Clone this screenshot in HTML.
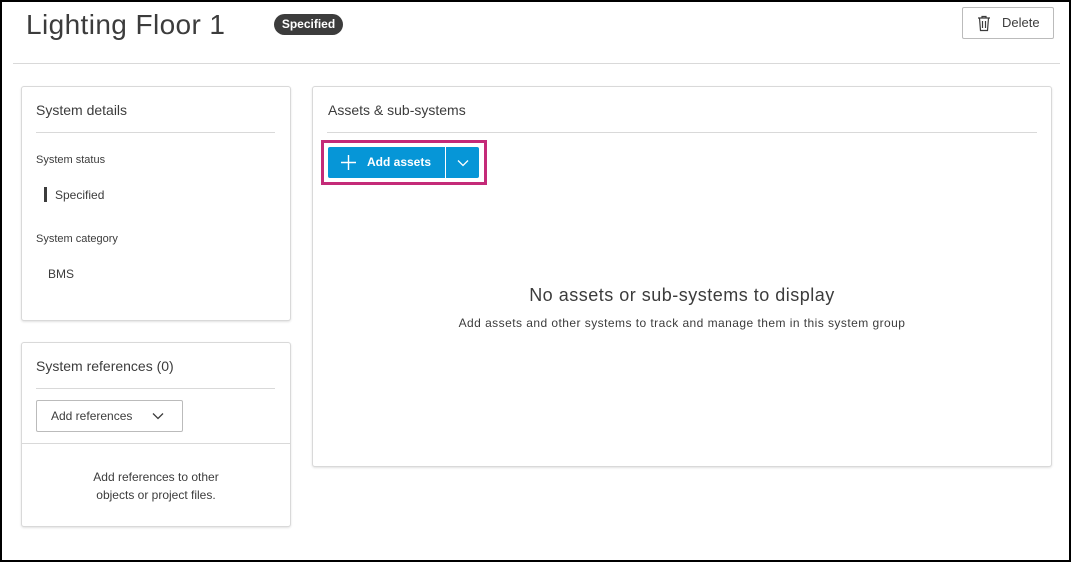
<!DOCTYPE html><html><head><style>
body{margin:0;width:1071px;height:562px;overflow:hidden;font-family:"Liberation Sans",sans-serif;color:#3c3c3c}
.frame{position:absolute;left:0;top:0;width:1067px;height:558px;border:2px solid #000;background:#fff}
.a{position:absolute}
.card{position:absolute;border:1px solid #d9d9d9;border-radius:3px;background:#fff;box-shadow:0 1px 2px rgba(0,0,0,.12)}
.line{position:absolute;height:1px;background:#d9d9d9}
</style></head><body><div class="frame"></div>
<div class="a" style="left:26px;top:9px;font-size:28px;letter-spacing:0.4px;color:#3c3c3c">Lighting Floor 1</div>
<div class="a" style="left:274px;top:14px;width:69px;height:21px;border-radius:11px;background:#3c3c3c;color:#fff;font-size:12px;font-weight:bold;line-height:21px;text-align:center">Specified</div>
<div class="a" style="left:962px;top:7px;width:90px;height:30px;border:1px solid #bbb;border-radius:2px;font-size:13px;line-height:30px">
<svg class="a" style="left:13px;top:7px" width="16" height="17" viewBox="0 0 16 17" fill="none" stroke="#3c3c3c" stroke-width="1.2"><path d="M2 3h12M6 3V1.5h4V3M3.5 3l1 12.5h7l1-12.5M6.5 6v7M9.5 6v7"/></svg>
<span class="a" style="left:39px">Delete</span></div>
<div class="line" style="left:13px;top:63px;width:1047px"></div>
<div class="card" style="left:21px;top:86px;width:268px;height:233px"></div>
<div class="a" style="left:36px;top:102px;font-size:14px">System details</div>
<div class="line" style="left:36px;top:132px;width:239px"></div>
<div class="a" style="left:36px;top:154px;font-size:11px">System status</div>
<div class="a" style="left:44px;top:187px;width:3px;height:15px;background:#3c3c3c"></div>
<div class="a" style="left:55px;top:188px;font-size:12px">Specified</div>
<div class="a" style="left:36px;top:233px;font-size:11px">System category</div>
<div class="a" style="left:48px;top:267px;font-size:12px">BMS</div>
<div class="card" style="left:21px;top:342px;width:268px;height:183px"></div>
<div class="a" style="left:36px;top:358px;font-size:14px">System references (0)</div>
<div class="line" style="left:36px;top:388px;width:239px"></div>
<div class="a" style="left:36px;top:400px;width:145px;height:30px;border:1px solid #bbb;border-radius:2px;font-size:12px;line-height:30px"><span style="margin-left:14px">Add references</span>
<svg class="a" style="left:115px;top:11px" width="12" height="8" fill="none" stroke="#3c3c3c" stroke-width="1.3"><path d="M1 1.5l5 5 5-5"/></svg></div>
<div class="line" style="left:22px;top:443px;width:268px"></div>
<div class="a" style="left:22px;top:468px;width:268px;text-align:center;font-size:12px;line-height:18px">Add references to other<br>objects or project files.</div>
<div class="card" style="left:312px;top:86px;width:738px;height:379px"></div>
<div class="a" style="left:328px;top:102px;font-size:14px">Assets &amp; sub-systems</div>
<div class="line" style="left:327px;top:132px;width:710px"></div>
<div class="a" style="left:321px;top:140px;width:160px;height:39px;border:3px solid #c42a78"></div>
<div class="a" style="left:328px;top:147px;width:151px;height:31px;background:#0696d7;border-radius:2px;color:#fff">
<svg class="a" style="left:13px;top:8px" width="15" height="15" stroke="#fff" stroke-width="1.4"><path d="M7.5 0v15M0 7.5h15"/></svg>
<span class="a" style="left:39px;top:8px;font-size:12px;font-weight:bold">Add assets</span>
<div class="a" style="left:117px;top:0;width:1px;height:31px;background:#fff"></div>
<svg class="a" style="left:129px;top:12px" width="12" height="8" fill="none" stroke="#fff" stroke-width="1.3"><path d="M1 1.5l5 5 5-5"/></svg></div>
<div class="a" style="left:312px;top:285px;width:740px;text-align:center;font-size:18px;letter-spacing:0.5px">No assets or sub-systems to display</div>
<div class="a" style="left:312px;top:316px;width:740px;text-align:center;font-size:12px;letter-spacing:0.45px">Add assets and other systems to track and manage them in this system group</div>
</body></html>
